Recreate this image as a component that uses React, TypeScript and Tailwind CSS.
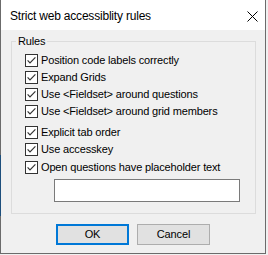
const rules = [
  { label: 'Position code labels correctly', extra: 'mt-[4px]' },
  { label: 'Expand Grids', extra: '' },
  { label: 'Use <Fieldset> around questions', extra: '' },
  { label: 'Use <Fieldset> around grid members', extra: '' },
  { label: 'Explicit tab order', extra: 'mt-[4px]' },
  { label: 'Use accesskey', extra: '' },
  { label: 'Open questions have placeholder text', extra: 'mt-[1px]' },
];

const CheckBox = () => (
  <svg width="13" height="13" viewBox="0 0 13 13" className="shrink-0">
    <rect x="0.5" y="0.5" width="12" height="12" fill="#fff" stroke="#333" />
    <path d="M2.6 6.4L5 8.9L10.4 3.4" fill="none" stroke="#333" strokeWidth="1.2" />
  </svg>
);

export default function App() {
  return (
    <div className="w-[268px] h-[255px] bg-[#f0f0f0] font-['Liberation_Sans',Arial,sans-serif] text-black">
      <div className="flex w-[266px] h-[254px] border-b border-r border-[#6b6b6b]">
        <div className="w-px shrink-0 bg-[linear-gradient(to_bottom,#6b6b6b_155px,#1d4f7c_155px,#1d4f7c_216px,#6b6b6b_216px)]" />
        <div className="flex-1 flex flex-col">
          {/* title bar */}
          <div className="h-[30px] shrink-0 bg-white flex items-start justify-between pl-[9px] pr-[7px]">
            <span className="pt-[9px] text-[12px] leading-[14px] tracking-[-0.2px]">Strict web accessiblity rules</span>
            <svg className="mt-[11px]" width="11" height="11" viewBox="0 0 11 11">
              <path d="M0.5 0.5L10.5 10.5M10.5 0.5L0.5 10.5" stroke="#000" strokeWidth="1" />
            </svg>
          </div>

          {/* body */}
          <div className="flex-1 flex flex-col pt-[11px] text-[11px] leading-[13px] tracking-[-0.15px]">
            <div className="ml-[10px] w-[245px] h-[173px] border border-[#dcdcdc] flex flex-col">
              <span className="-mt-[7px] ml-[4px] w-fit px-[2px] bg-[#f0f0f0]">Rules</span>
              <div className="flex flex-col pl-[13px]">
                {rules.map((r) => (
                  <label key={r.label} className={`h-[17px] flex items-center gap-[3px] ${r.extra}`}>
                    <CheckBox />
                    <span className="whitespace-nowrap">{r.label}</span>
                  </label>
                ))}
              </div>
              <input
                defaultValue=""
                className="mt-[3px] ml-[42px] w-[186px] h-[23px] bg-white border border-[#7a7a7a] outline-none"
              />
            </div>

            <div className="mt-[10px] flex justify-center gap-[8px]">
              <button className="w-[73px] h-[21px] bg-[#e1e1e1] border-2 border-[#0078d7] flex items-center justify-center">
                OK
              </button>
              <button className="w-[73px] h-[21px] bg-[#e1e1e1] border border-[#adadad] flex items-center justify-center">
                Cancel
              </button>
            </div>
          </div>
        </div>
      </div>
    </div>
  );
}
